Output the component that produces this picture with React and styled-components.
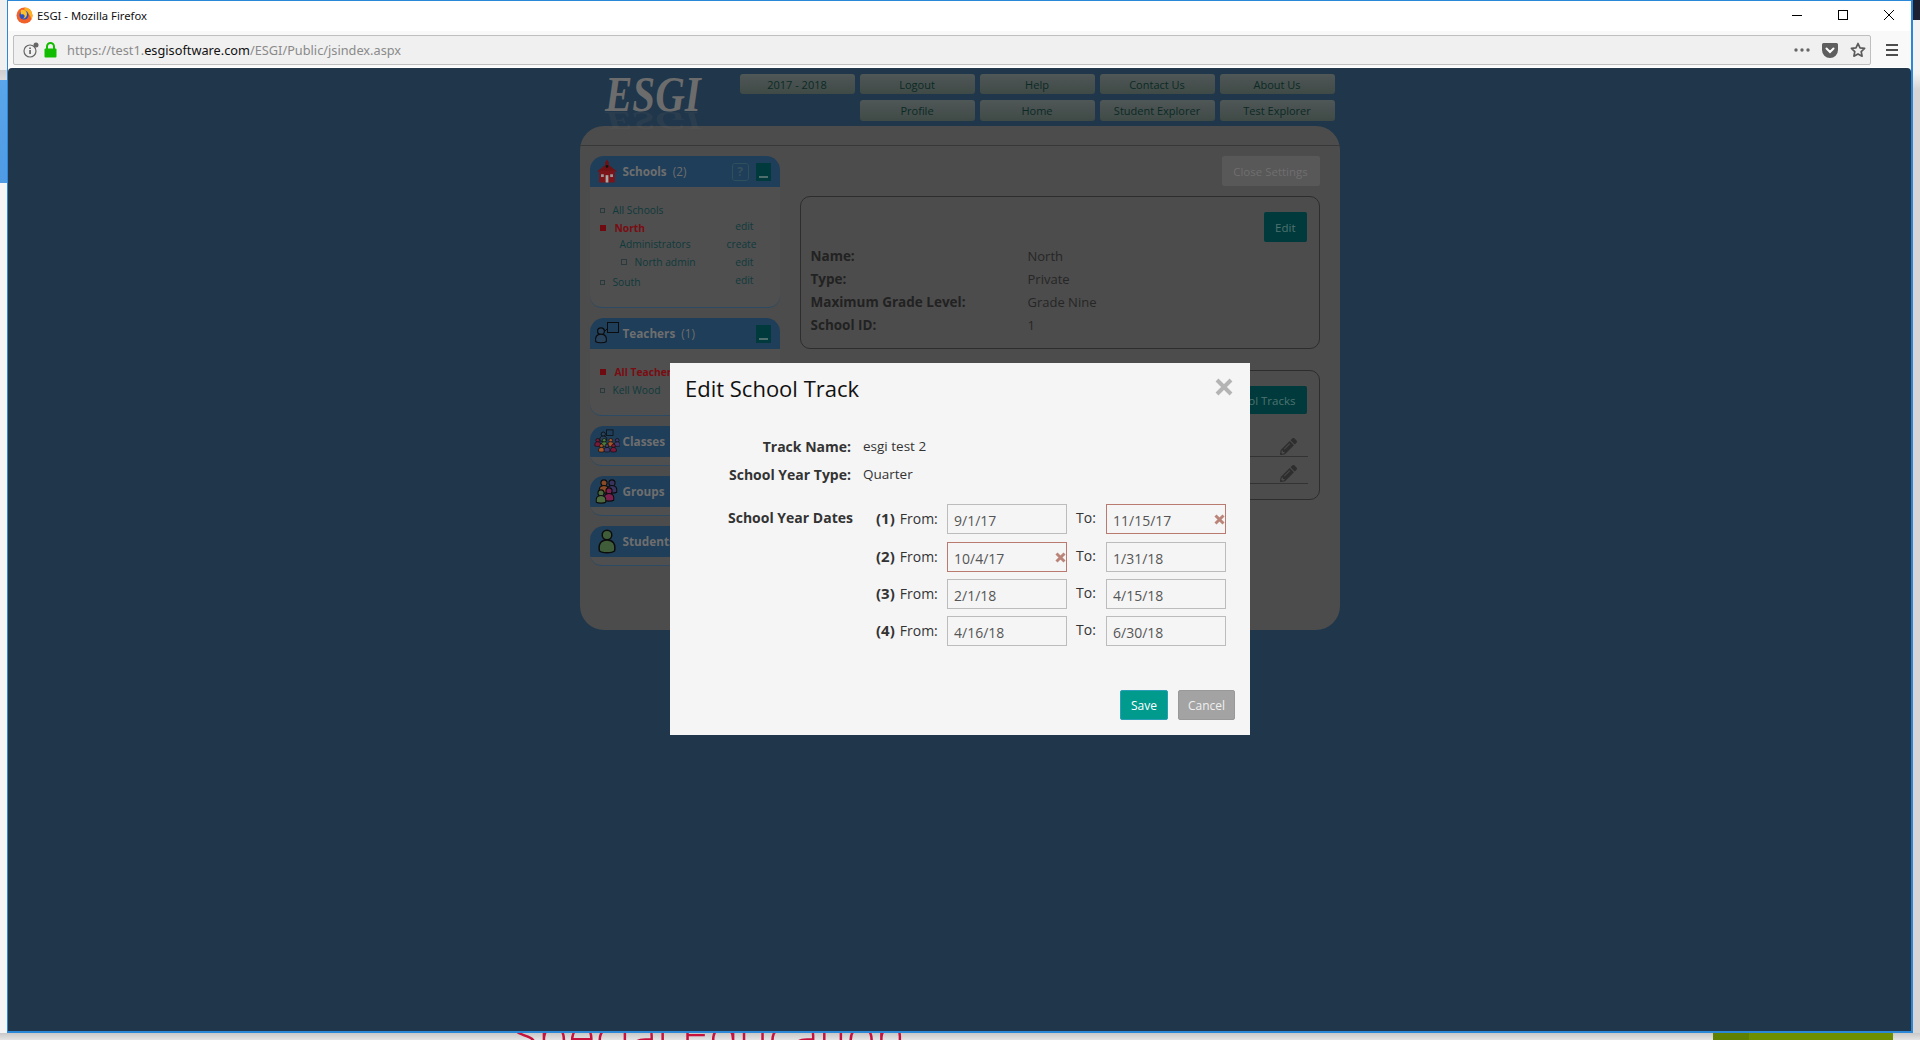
import React from 'react'
import styled, { createGlobalStyle } from 'styled-components'
import { FaPencilAlt } from 'react-icons/fa'

const GlobalStyle = createGlobalStyle`
  html, body { margin: 0; padding: 0; overflow: hidden; }
  * { box-sizing: border-box; }
  body { font-family: "Open Sans", "Liberation Sans", sans-serif; }
`

const Desktop = styled.div`
  width: 1920px;
  height: 1040px;
  display: flex;
  flex-direction: column;
  background: #e2e2e2;
  overflow: hidden;
`
const Middle = styled.div`
  display: flex;
  height: 1033px;
`
const LeftEdge = styled.div`
  width: 7px;
  background: linear-gradient(
    #f0f0f0 0, #f0f0f0 70px, #cfcfcf 70px, #dcdcdc 80px, #5ba6ea 80px, #4f9be4 183px,
    #f5f5f5 183px, #f5f5f5 100%
  );
`
const RightEdge = styled.div`
  width: 7px;
  background: linear-gradient(#1c2030 0, #1c2030 20px, #f3f3f3 20px, #f3f3f3 73px, #d6d6d6 90px, #d6d6d6 100%);
`
const Window = styled.div`
  width: 1906px;
  display: flex;
  flex-direction: column;
  background: #fff;
  border: 1px solid #2b88d8;
  border-width: 1px 2px 2px 1px;
`
const TitleBar = styled.div`
  height: 30px;
  padding: 0 0 2px 8px;
  display: flex;
  align-items: center;
  background: #fff;
  color: #111;
  gap: 4px;
`
const TitleText = styled.span`
  flex: 1;
  font-family: "Noto Sans", sans-serif;
  font-size: 11.25px;
`
const WindowControls = styled.div`
  display: flex;
  height: 100%;
  margin-right: -1px;
`
const WindowControl = styled.div`
  width: 46px;
  display: flex;
  align-items: center;
  justify-content: center;
`
const Toolbar = styled.div`
  height: 36px;
  display: flex;
  align-items: center;
  background: #f9f9fa;
  padding: 2px 13px 0 5px;
`
const UrlBar = styled.div`
  width: 1861px;
  height: 30px;
  display: flex;
  align-items: center;
  background: #f0f0f0;
  border: 1px solid #bfbfbf;
  border-radius: 2px;
  padding: 0 4px 0 9px;
  font-family: "Noto Sans", sans-serif;
  font-size: 12.75px;
  color: #8a8a8a;
`
const UrlText = styled.span`
  flex: 1;
  margin-left: 10px;
  b { font-weight: 400; color: #111; }
`
const UrlIcons = styled.div`
  display: flex;
  align-items: center;
  gap: 12px;
`
const LockGap = styled.span`
  width: 5px;
`
const MenuButton = styled.div`
  margin-left: 15px;
  display: flex;
  flex-direction: column;
  gap: 3px;
  i { display: block; width: 12px; height: 2px; background: #4d4d4d; }
`
const Page = styled.div`
  position: relative;
  flex: 1;
  background: #1f364b;
  border-radius: 4px 4px 0 0;
  margin-top: 1px;
`
const Site = styled.div`
  width: 760px;
  margin: 0 auto;
`
const SiteHeader = styled.div`
  height: 58px;
  display: flex;
  justify-content: space-between;
  padding: 6px 5px 0 25px;
`
const Logo = styled.div`
  position: relative;
  width: 100px;
  height: 40px;
  font-family: "Liberation Serif", serif;
  font-style: italic;
  font-weight: 700;
  font-size: 50px;
  line-height: 40px;
  color: #6c6c6c;
  white-space: nowrap;
  transform: scaleX(0.82);
  transform-origin: left top;
  &::after {
    content: 'ESGI';
    position: absolute;
    left: 0;
    top: 26px;
    transform: scaleY(-0.5);
    opacity: 0.14;
  }
`
const Nav = styled.div`
  display: grid;
  grid-template-columns: repeat(5, 115px);
  grid-template-rows: 20px 21px;
  gap: 6px 5px;
`
const NavButton = styled.div`
  grid-column: ${p => p.$col || 'auto'};
  display: flex;
  align-items: center;
  justify-content: center;
  border-radius: 3px;
  background: linear-gradient(#505757, #3f4a46);
  color: #0b2a25;
  font-size: 11px;
`
const Panel = styled.div`
  height: 504px;
  background: #4c4c4c;
  border-radius: 24px;
`
const PanelTop = styled.div`
  height: 20px;
  border-bottom: 1px solid #383838;
`
const PanelBody = styled.div`
  display: flex;
  gap: 20px;
  padding: 10px 20px 0 10px;
`
const Sidebar = styled.div`
  width: 190px;
  display: flex;
  flex-direction: column;
  gap: 10px;
`
const Card = styled.div`
  height: ${p => p.$h}px;
  background: #4f4f4f;
  border-radius: 14px 14px 12px 12px;
  border-bottom: 1px solid #2c4a63;
  overflow: hidden;
`
const CardHeader = styled.div`
  height: 31px;
  display: flex;
  align-items: center;
  background: #1f3e5a;
  padding: 0 9px 0 2px;
  color: #6e6e6e;
  font-size: 11.75px;
  font-weight: 700;
`
const CardIcon = styled.span`
  width: 30px;
  height: 31px;
  flex: none;
  display: flex;
  align-items: center;
  justify-content: center;
`
const CardTitle = styled.span`
  flex: 1;
  margin-left: 1px;
  padding-bottom: 2px;
  span { font-weight: 400; margin-left: 6px; }
`
const HelpBox = styled.span`
  width: 17px;
  height: 18px;
  display: flex;
  align-items: center;
  justify-content: center;
  border: 1px solid #2f4f5c;
  border-radius: 3px;
  color: #36505a;
  font-size: 12px;
  margin-right: 7px;
`
const MinBox = styled.span`
  width: 15px;
  height: 18px;
  display: flex;
  align-items: flex-end;
  justify-content: center;
  padding-bottom: 3px;
  background: #003a3c;
  &::after { content: ''; display: block; width: 9px; height: 2px; background: #4f6f6f; }
`
const CardList = styled.div`
  padding-top: ${p => p.$top}px;
  font-size: 10.25px;
  color: #0f3a3c;
`
const ListRow = styled.div`
  height: ${p => p.$h || 18}px;
  display: flex;
  align-items: center;
  padding-left: ${p => p.$indent || 10}px;
`
const Bullet = styled.i`
  width: ${p => (p.$big ? 6 : p.$box ? 6 : 5)}px;
  height: ${p => (p.$big ? 6 : p.$box ? 6 : 5)}px;
  margin-right: ${p => p.$gap || 8}px;
  flex: none;
  background: ${p => (p.$big ? '#6e0a10' : 'transparent')};
  border: 1px solid ${p => (p.$big ? '#6e0a10' : '#2a3a3c')};
`
const ItemName = styled.span`
  flex: 1;
  white-space: nowrap;
  font-weight: ${p => (p.$active ? 700 : 400)};
  color: ${p => (p.$active ? '#7a0c12' : '#0f3a3c')};
`
const ItemAction = styled.span`
  width: 60px;
  padding-right: ${p => p.$pad || 26}px;
  text-align: right;
  position: relative;
  top: ${p => (p.$up ? '-2px' : '0')};
`
const Main = styled.div`
  width: 520px;
`
const MainTop = styled.div`
  display: flex;
  justify-content: flex-end;
  margin-bottom: 10px;
`
const CloseSettings = styled.div`
  width: 98px;
  height: 30px;
  display: flex;
  align-items: center;
  justify-content: center;
  background: #585858;
  color: #6f6f6f;
  font-size: 11.5px;
  border-radius: 2px;
`
const Box = styled.div`
  height: ${p => p.$h}px;
  margin-bottom: 21px;
  padding: 15px 12px 0 10px;
  border: 1px solid #2d2d2d;
  border-radius: 10px;
`
const BoxActions = styled.div`
  display: flex;
  justify-content: flex-end;
`
const TealButton = styled.div`
  height: ${p => p.$h}px;
  padding: 0 11px;
  display: flex;
  align-items: center;
  background: #003a3c;
  border-radius: 2px;
  color: #4e7370;
  font-size: 11.5px;
`
const InfoGrid = styled.div`
  display: grid;
  grid-template-columns: 217px 1fr;
  grid-auto-rows: 23px;
  align-items: center;
  margin-top: 2px;
`
const InfoLabel = styled.div`
  font-weight: 700;
  color: #222;
  font-size: 13.5px;
`
const InfoValue = styled.div`
  font-size: 13px;
  color: #262626;
`
const TrackRows = styled.div`
  margin: 16px -2px 0 0;
`
const TrackRow = styled.div`
  height: 27px;
  margin-right: 1px;
  display: flex;
  align-items: center;
  justify-content: flex-end;
  padding: 6px 11px 0 0;
  border-bottom: 1px solid #333;
  color: #2e2e2e;
  font-size: 17px;
`

/* modal */
const Modal = styled.div`
  position: absolute;
  left: 662px;
  top: 295px;
  width: 580px;
  height: 372px;
  background: #f5f5f5;
  color: #333;
  font-size: 13.5px;
`
const ModalHeader = styled.div`
  height: 50px;
  display: flex;
  align-items: center;
  justify-content: space-between;
  padding: 0 17px 0 15px;
  svg { margin-bottom: 2px; }
`
const ModalTitle = styled.div`
  font-size: 22px;
  color: #111;
`
const Fields = styled.div`
  display: grid;
  grid-template-columns: 181px 1fr;
  grid-auto-rows: 28px;
  column-gap: 12px;
  align-items: center;
  margin-top: 19px;
`
const FieldLabel = styled.div`
  font-weight: 700;
  font-size: 14px;
  text-align: right;
`
const DatesSection = styled.div`
  display: flex;
  margin-top: 16px;
  padding-left: 58px;
`
const DatesLabel = styled.div`
  width: 148px;
  font-weight: 700;
  font-size: 14px;
  line-height: 28px;
`
const DatesGrid = styled.div`
  display: grid;
  grid-template-columns: 71px 120px 39px 120px;
  grid-template-rows: 31px 30px 30px 30px;
  row-gap: 7px;
  line-height: 28px;
  font-size: 14px;
`
const RowLabel = styled.div`
  white-space: nowrap;
  b { font-size: 15px; margin-right: 5px; }
`
const ToLabel = styled.div`
  padding-left: 9px;
`
const DateBox = styled.div`
  position: relative;
  height: 30px;
`
const DateInput = styled.input`
  width: 120px;
  height: 30px;
  padding: 2px 6px 0;
  border: 1px solid ${p => (p.$error ? '#b97a6f' : '#bcbcbc')};
  background: #f5f5f5;
  color: #555;
  font: 14px "Open Sans", sans-serif;
  outline: none;
`
const ErrorMark = styled.svg`
  position: absolute;
  right: 1px;
  top: 10px;
  width: 11px;
  height: 11px;
`
const ModalFooter = styled.div`
  display: flex;
  justify-content: flex-end;
  gap: 10px;
  margin-top: 44px;
  padding-right: 15px;
`
const ModalButton = styled.div`
  width: ${p => p.$w}px;
  height: 30px;
  display: flex;
  align-items: center;
  justify-content: center;
  border: 1px solid ${p => (p.$primary ? '#2a9eb4' : '#999')};
  border-radius: 2px;
  background: ${p => (p.$primary ? '#009b8d' : '#a3a3a3')};
  color: ${p => (p.$primary ? '#fff' : '#efefef')};
  font-size: 12px;
`

/* bottom of what is behind the browser */
const BottomEdge = styled.div`
  height: 7px;
  display: flex;
  overflow: hidden;
  background: linear-gradient(#c8c8c8, #e4e4e4);
`
const BehindText = styled.div`
  margin-left: 511px;
  width: 1202px;
  flex: none;
  margin-top: -27px;
  height: 59px;
  font-family: "Open Sans", sans-serif;
  font-size: 50px;
  line-height: 59px;
  color: #c6123c;
  font-weight: 300;
  white-space: nowrap;
`
const GreenBlock = styled.div`
  width: 180px;
  flex: none;
  background: linear-gradient(90deg, #5f8000 0, #5f8000 36px, #6e9000 36px);
`

const Firefox = () => (
  <svg width="17" height="17" viewBox="0 0 17 17">
    <circle cx="8.5" cy="8.5" r="8" fill="#f2612a" />
    <path d="M8.5.5a8 8 0 0 1 8 8c0 1.5-.4 2.8-1 4-1-4-3-7-7-7z" fill="#ffb21e" />
    <circle cx="8" cy="8" r="4.6" fill="#2b4fc0" />
    <path d="M5 3c3-1 6 1 6 4 0 3-2 5-5 4.500 2 0 3-1.500 2.500-3C8 7 6 7 5 7.500 4.600 6 4.500 4.500 5 3z" fill="#fbc02d" />
  </svg>
)
const InfoIcon = () => (
  <svg width="16" height="16" viewBox="0 0 16 16">
    <circle cx="7" cy="9" r="6" fill="none" stroke="#666" strokeWidth="1.200" />
    <rect x="6.300" y="8" width="1.500" height="4" fill="#555" />
    <rect x="6.300" y="5.500" width="1.500" height="1.500" fill="#555" />
    <circle cx="13" cy="3" r="2.500" fill="#666" />
  </svg>
)
const LockIcon = () => (
  <svg width="13" height="16" viewBox="0 0 13 16">
    <rect x="0.500" y="6.500" width="12" height="9" rx="1" fill="#12bc00" />
    <path d="M3 7V4.500a3.500 3.500 0 0 1 7 0V7" fill="none" stroke="#12bc00" strokeWidth="2" />
  </svg>
)
const DotsIcon = () => (
  <svg width="16" height="4" viewBox="0 0 16 4" fill="#666">
    <circle cx="2" cy="2" r="1.700" /><circle cx="8" cy="2" r="1.700" /><circle cx="14" cy="2" r="1.700" />
  </svg>
)
const PocketIcon = () => (
  <svg width="16" height="15" viewBox="0 0 16 15">
    <path d="M1.500 0h13A1.500 1.500 0 0 1 16 1.500V7A8 8 0 0 1 0 7V1.500A1.500 1.500 0 0 1 1.500 0z" fill="#5f5f5f" />
    <path d="M4.500 5.500L8 9l3.500-3.500" fill="none" stroke="#fff" strokeWidth="2" strokeLinecap="round" />
  </svg>
)
const StarIcon = () => (
  <svg width="16" height="16" viewBox="0 0 16 16">
    <path d="M8 1.500l2 4.300 4.600.6-3.400 3.200.9 4.600L8 11.900l-4.100 2.300.9-4.600L1.400 6.400 6 5.800z" fill="none" stroke="#5a5a5a" strokeWidth="1.700" strokeLinejoin="round" />
  </svg>
)
const MinimizeGlyph = () => (
  <svg width="10" height="10" viewBox="0 0 10 10"><path d="M0 5.500h10" stroke="#000" /></svg>
)
const MaximizeGlyph = () => (
  <svg width="10" height="10" viewBox="0 0 10 10"><rect x=".5" y=".5" width="9" height="9" fill="none" stroke="#000" /></svg>
)
const CloseGlyph = () => (
  <svg width="10" height="10" viewBox="0 0 10 10"><path d="M0 0l10 10M10 0L0 10" stroke="#000" /></svg>
)
const ModalClose = () => (
  <svg width="18" height="18" viewBox="0 0 18 18"><path d="M2 2l14 14M16 2L2 16" stroke="#b4b4b4" strokeWidth="4" /></svg>
)

const Person = ({ x, y, s = 1, fill }) => (
  <g transform={`translate(${x} ${y}) scale(${s})`} stroke="#0c0c0c" strokeWidth={1.3} fill={fill}>
    <circle cx="0" cy="-6" r="3.600" />
    <path d="M-5.500 5c-1-5 1-8 5.500-8s6.500 3 5.500 8c-2 1.400-9 1.400-11 0z" />
  </g>
)
const SchoolIcon = () => (
  <svg width="22" height="25" viewBox="0 0 24 26">
    <path d="M12 0l2 3v3l9 7H1l9-7V3z" fill="#6d1316" />
    <rect x="3.500" y="12" width="17" height="13" fill="#7b1519" />
    <circle cx="12" cy="7.500" r="1.500" fill="#111" />
    <rect x="10.500" y="17" width="3" height="8" fill="#a9a9a9" />
    <rect x="5.500" y="16" width="3" height="3" fill="#999" /><rect x="15.500" y="16" width="3" height="3" fill="#999" />
  </svg>
)
const TeacherIcon = () => (
  <svg width="26" height="24" viewBox="0 0 26 24">
    <Person x={7} y={15} s={0.95} fill="#27425a" />
    <path d="M10 10l4-4" stroke="#0c0c0c" fill="none" />
    <rect x="13.500" y="0.500" width="11" height="10" fill="none" stroke="#0c0c0c" />
  </svg>
)
const ClassesIcon = () => (
  <svg width="26" height="25" viewBox="0 0 28 26">
    <Person x={10} y={9} s={0.65} fill="#27425a" />
    <rect x="13.500" y="0.500" width="7" height="6" fill="none" stroke="#0c0c0c" strokeWidth="0.800" />
    <Person x={4} y={15} s={0.55} fill="#7a1a3a" />
    <Person x={11} y={15} s={0.55} fill="#4b7a3a" />
    <Person x={18} y={15} s={0.55} fill="#a8552a" />
    <Person x={25} y={15} s={0.55} fill="#3f3a6a" />
    <Person x={8} y={21} s={0.55} fill="#a8552a" />
    <Person x={14} y={21} s={0.55} fill="#3f3a6a" />
    <Person x={21} y={21} s={0.55} fill="#7a1a3a" />
  </svg>
)
const GroupsIcon = () => (
  <svg width="24" height="26" viewBox="0 0 24 26">
    <Person x={9} y={9} s={0.85} fill="#8a4a28" />
    <Person x={17} y={9} s={0.85} fill="#38345e" />
    <Person x={14} y={17} s={0.85} fill="#7a1f4e" />
    <Person x={6} y={19} s={0.85} fill="#4d6a3e" />
  </svg>
)
const StudentIcon = () => (
  <svg width="18" height="26" viewBox="0 0 18 26">
    <circle cx="9" cy="6" r="4.800" fill="#3f5d38" stroke="#0c0c0c" strokeWidth="1.500" />
    <path d="M1.500 22c-1.500-7 1.500-11 7.500-11s9 4 7.500 11c-3 2.400-12 2.400-15 0z" fill="#3f5d38" stroke="#0c0c0c" strokeWidth="1.500" />
  </svg>
)

const navTop = ['2017 - 2018', 'Logout', 'Help', 'Contact Us', 'About Us']
const navBottom = ['Profile', 'Home', 'Student Explorer', 'Test Explorer']

const infoRows = [
  ['Name:', 'North'],
  ['Type:', 'Private'],
  ['Maximum Grade Level:', 'Grade Nine'],
  ['School ID:', '1'],
]

const dateRows = [
  { n: 1, from: '9/1/17', to: '11/15/17', toError: true },
  { n: 2, from: '10/4/17', to: '1/31/18', fromError: true },
  { n: 3, from: '2/1/18', to: '4/15/18' },
  { n: 4, from: '4/16/18', to: '6/30/18' },
]

function DateField({ value, error }) {
  return (
    <DateBox>
      <DateInput readOnly value={value} $error={error} />
      {error && (
        <ErrorMark viewBox="0 0 11 11">
          <path d="M1.500 1.500l8 8M9.500 1.500l-8 8" stroke="#bb8479" strokeWidth="3" />
        </ErrorMark>
      )}
    </DateBox>
  )
}

export default function App() {
  return (
    <>
      <GlobalStyle />
      <Desktop>
        <Middle>
          <LeftEdge />
          <Window>
            <TitleBar>
              <Firefox />
              <TitleText>ESGI - Mozilla Firefox</TitleText>
              <WindowControls>
                <WindowControl><MinimizeGlyph /></WindowControl>
                <WindowControl><MaximizeGlyph /></WindowControl>
                <WindowControl><CloseGlyph /></WindowControl>
              </WindowControls>
            </TitleBar>
            <Toolbar>
              <UrlBar>
                <InfoIcon />
                <LockGap />
                <LockIcon />
                <UrlText>https://test1.<b>esgisoftware.com</b>/ESGI/Public/jsindex.aspx</UrlText>
                <UrlIcons>
                  <DotsIcon />
                  <PocketIcon />
                  <StarIcon />
                </UrlIcons>
              </UrlBar>
              <MenuButton><i /><i /><i /></MenuButton>
            </Toolbar>
            <Page>
              <Site>
                <SiteHeader>
                  <Logo>ESGI</Logo>
                  <Nav>
                    {navTop.map(n => <NavButton key={n}>{n}</NavButton>)}
                    {navBottom.map((n, i) => <NavButton key={n} $col={i + 2}>{n}</NavButton>)}
                  </Nav>
                </SiteHeader>
                <Panel>
                  <PanelTop />
                  <PanelBody>
                    <Sidebar>
                      <Card $h={152}>
                        <CardHeader>
                          <CardIcon><SchoolIcon /></CardIcon>
                          <CardTitle>Schools<span>(2)</span></CardTitle>
                          <HelpBox>?</HelpBox>
                          <MinBox />
                        </CardHeader>
                        <CardList $top={14}>
                          <ListRow><Bullet /><ItemName>All Schools</ItemName></ListRow>
                          <ListRow><Bullet $big $gap={9} /><ItemName $active>North</ItemName><ItemAction $up>edit</ItemAction></ListRow>
                          <ListRow $h={14} $indent={30}><ItemName>Administrators</ItemName><ItemAction $pad={23}>create</ItemAction></ListRow>
                          <ListRow $h={21} $indent={31}><Bullet $box $gap={8} /><ItemName>North admin</ItemName><ItemAction>edit</ItemAction></ListRow>
                          <ListRow $h={20}><Bullet /><ItemName>South</ItemName><ItemAction $up>edit</ItemAction></ListRow>
                        </CardList>
                      </Card>
                      <Card $h={98}>
                        <CardHeader>
                          <CardIcon><TeacherIcon /></CardIcon>
                          <CardTitle>Teachers<span>(1)</span></CardTitle>
                          <MinBox />
                        </CardHeader>
                        <CardList $top={14}>
                          <ListRow><Bullet $big $gap={9} /><ItemName $active>All Teachers</ItemName></ListRow>
                          <ListRow><Bullet /><ItemName>Kell Wood</ItemName></ListRow>
                        </CardList>
                      </Card>
                      <Card $h={40}>
                        <CardHeader><CardIcon><ClassesIcon /></CardIcon><CardTitle>Classes</CardTitle></CardHeader>
                      </Card>
                      <Card $h={40}>
                        <CardHeader><CardIcon><GroupsIcon /></CardIcon><CardTitle>Groups</CardTitle></CardHeader>
                      </Card>
                      <Card $h={40}>
                        <CardHeader><CardIcon><StudentIcon /></CardIcon><CardTitle>Students</CardTitle></CardHeader>
                      </Card>
                    </Sidebar>
                    <Main>
                      <MainTop><CloseSettings>Close Settings</CloseSettings></MainTop>
                      <Box $h={153}>
                        <BoxActions><TealButton $h={30}>Edit</TealButton></BoxActions>
                        <InfoGrid>
                          {infoRows.map(([label, value]) => (
                            <React.Fragment key={label}>
                              <InfoLabel>{label}</InfoLabel>
                              <InfoValue>{value}</InfoValue>
                            </React.Fragment>
                          ))}
                        </InfoGrid>
                      </Box>
                      <Box $h={130}>
                        <BoxActions><TealButton $h={28}>School Tracks</TealButton></BoxActions>
                        <TrackRows>
                          <TrackRow><FaPencilAlt /></TrackRow>
                          <TrackRow><FaPencilAlt /></TrackRow>
                        </TrackRows>
                      </Box>
                    </Main>
                  </PanelBody>
                </Panel>
              </Site>
              <Modal>
                <ModalHeader>
                  <ModalTitle>Edit School Track</ModalTitle>
                  <ModalClose />
                </ModalHeader>
                <Fields>
                  <FieldLabel>Track Name:</FieldLabel><div>esgi test 2</div>
                  <FieldLabel>School Year Type:</FieldLabel><div>Quarter</div>
                </Fields>
                <DatesSection>
                  <DatesLabel>School Year Dates</DatesLabel>
                  <DatesGrid>
                    {dateRows.map(r => (
                      <React.Fragment key={r.n}>
                        <RowLabel><b>({r.n})</b>From:</RowLabel>
                        <DateField value={r.from} error={r.fromError} />
                        <ToLabel>To:</ToLabel>
                        <DateField value={r.to} error={r.toError} />
                      </React.Fragment>
                    ))}
                  </DatesGrid>
                </DatesSection>
                <ModalFooter>
                  <ModalButton $primary $w={48}>Save</ModalButton>
                  <ModalButton $w={57}>Cancel</ModalButton>
                </ModalFooter>
              </Modal>
            </Page>
          </Window>
          <RightEdge />
        </Middle>
        <BottomEdge>
          <BehindText>Special Education</BehindText>
          <GreenBlock />
        </BottomEdge>
      </Desktop>
    </>
  )
}
